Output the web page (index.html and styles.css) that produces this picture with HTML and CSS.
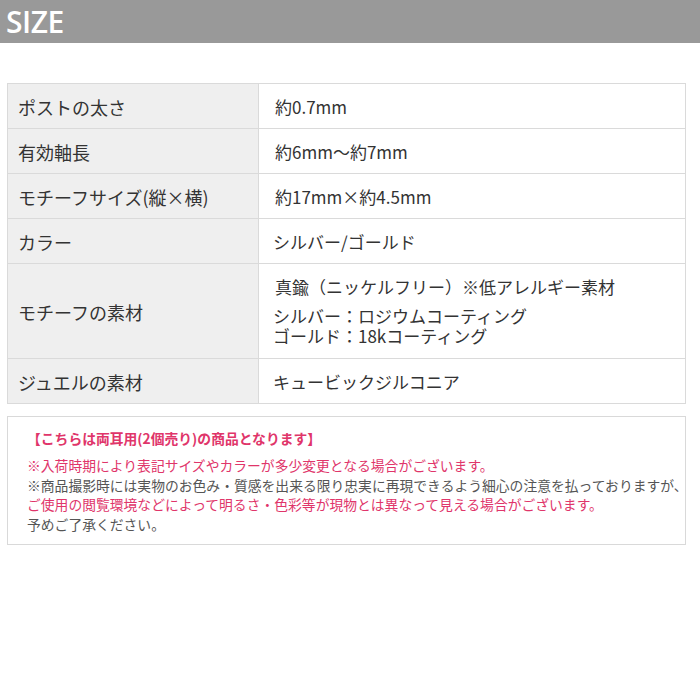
FILE: index.html
```html
<!DOCTYPE html>
<html lang="ja">
<head>
<meta charset="utf-8">
<link rel="stylesheet" href="styles.css">
</head>
<body>
<div class="head"><span class="head-title">SIZE</span></div>
<table class="spec">
  <tr><th>ポストの太さ</th><td>約0.7mm</td></tr>
  <tr><th>有効軸長</th><td>約6mm～約7mm</td></tr>
  <tr><th>モチーフサイズ(縦×横)</th><td>約17mm×約4.5mm</td></tr>
  <tr><th>カラー</th><td class="tight">シルバー/ゴールド</td></tr>
  <tr class="tall"><th>モチーフの素材</th><td><p class="first">真鍮（ニッケルフリー）※低アレルギー素材</p><p class="sub">シルバー：ロジウムコーティング<br>ゴールド：18kコーティング</p></td></tr>
  <tr><th>ジュエルの素材</th><td class="tight">キュービックジルコニア</td></tr>
</table>
<div class="note">
  <p class="note-title">【こちらは両耳用(2個売り)の商品となります】</p>
  <p class="note-body"><span class="pink">※入荷時期により表記サイズやカラーが多少変更となる場合がございます。</span><br>※商品撮影時には実物のお色み・質感を出来る限り忠実に再現できるよう細心の注意を払っておりますが、<br><span class="pink">ご使用の閲覧環境などによって明るさ・色彩等が現物とは異なって見える場合がございます。</span><br>予めご了承ください。</p>
</div>
</body>
</html>
```
FILE: styles.css
```css
html, body {
  margin: 0;
  padding: 0;
  background: #fff;
}
body {
  font-family: "Noto Sans CJK JP", "Noto Sans", sans-serif;
  color: #333;
}
.head {
  height: 43px;
  background: #999;
  padding-left: 6px;
  display: flex;
  align-items: center;
}
.head-title {
  font-family: "Open Sans", sans-serif;
  font-weight: 600;
  font-size: 30px;
  color: #fff;
  line-height: 1;
  letter-spacing: -0.5px;
  margin-top: 1px;
}
.spec {
  margin: 40px 0 0 7px;
  width: 679px;
  border-collapse: collapse;
  font-size: 17px;
}
.spec th, .spec td {
  border: 1px solid #dadada;
  line-height: 24px;
  padding: 11px 0 9px;
  text-align: left;
  vertical-align: middle;
}
.spec th {
  width: 240px;
  background: #efefef;
  font-weight: 400;
  font-size: 18px;
  padding-left: 10px;
}
.spec td {
  padding-left: 16px;
}
.spec td.tight {
  padding-left: 14px;
}
.spec tr.tall td {
  padding-bottom: 12px;
}
.spec p {
  margin: 0;
}
.spec p.first {
  margin-bottom: 7px;
}
.spec p.sub {
  line-height: 20px;
  margin-left: -2px;
}
.note {
  margin: 12px 0 0 7px;
  width: 679px;
  border: 1px solid #d9d9d9;
  padding: 11px 0 10px 19px;
  box-sizing: border-box;
  font-size: 13.8px;
  color: #555;
}
.note p {
  margin: 0;
  white-space: nowrap;
}
.note-title {
  color: #e0356a;
  font-weight: 700;
  line-height: 20px;
  margin-bottom: 8px !important;
}
.note-body {
  line-height: 19.6px;
}
.pink {
  color: #e0356a;
}
```
